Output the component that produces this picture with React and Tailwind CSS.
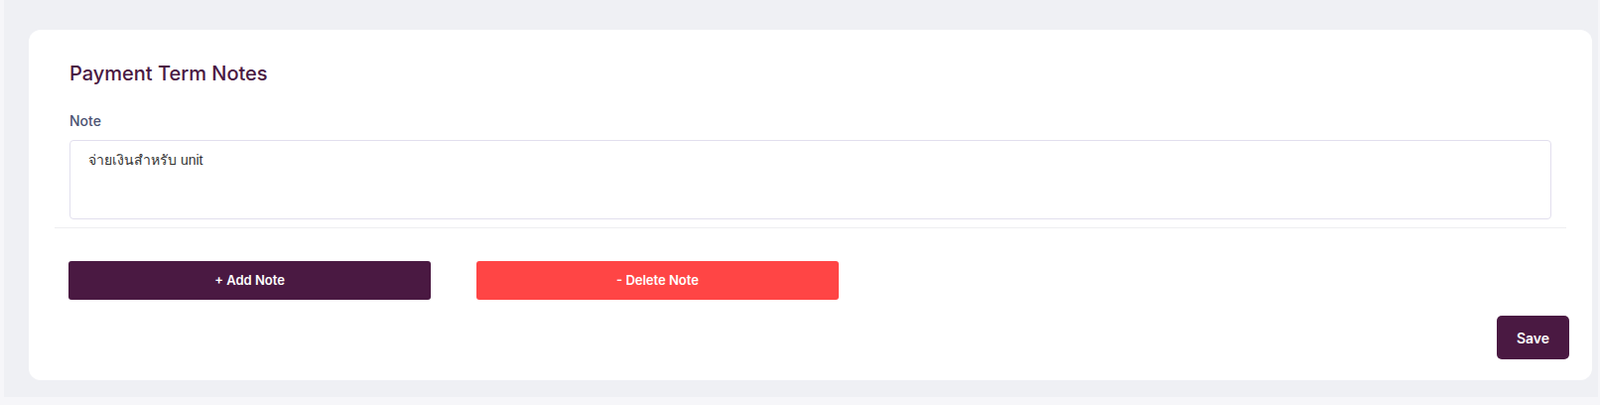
import React from "react";

export default function App() {
  return (
    <div className="w-full h-[408px] bg-[#f6f6f9] font-['Inter','Noto_Sans',sans-serif]">
      <div className="ml-[4px] w-[1606px] h-[400px] bg-[#eff0f4] pt-[30px] pl-[25px] pr-[2px]">
        <div className="bg-white rounded-[12px] h-[353px] w-[1575px] flex flex-col pt-[30px]">
          <h2 className="pl-[41px] text-[20px] leading-[28px] font-medium text-[#4a1942]">
            Payment Term Notes
          </h2>
          <div className="px-[26px] mt-[24px]">
            <div className="px-[15px] pb-[8px] border-b border-[#eeeef0]">
              <label className="block text-[14px] leading-[20px] font-medium text-[#4c5372] mb-[9px]">
                Note
              </label>
              <textarea
                className="block w-full h-[80px] border border-[#e2dfee] rounded-[4px] pl-[18px] pt-[9px] text-[14px] leading-[20px] text-[#333333] resize-none outline-none font-['Liberation_Sans','Noto_Sans',sans-serif]"
                defaultValue="จ่ายเงินสำหรับ unit"
              />
            </div>
          </div>
          <div className="flex gap-[46px] pl-[40px] mt-[33px]">
            <button className="w-[365px] h-[39px] rounded-[3px] bg-[#4a1942] text-white text-[13px] font-semibold">
              + Add Note
            </button>
            <button className="w-[365px] h-[39px] rounded-[3px] bg-[#ff4545] text-white text-[13px] font-semibold">
              - Delete Note
            </button>
          </div>
          <div className="flex justify-end pr-[23px] mt-[16px]">
            <button className="w-[73px] h-[44px] rounded-[5px] bg-[#4a1942] text-white text-[14px] font-semibold">
              Save
            </button>
          </div>
        </div>
      </div>
    </div>
  );
}
